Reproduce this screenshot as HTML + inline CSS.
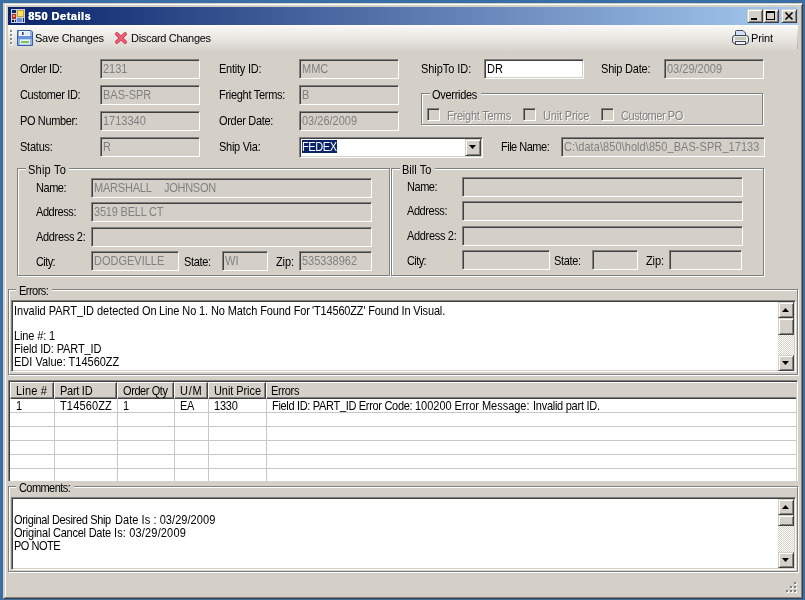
<!DOCTYPE html>
<html><head><meta charset="utf-8"><title>850 Details</title>
<style>
html,body{margin:0;padding:0;width:805px;height:600px;overflow:hidden;background:#3a6ea5}
body{position:relative;font-family:"Liberation Sans",sans-serif;font-size:11px}
div{font-family:"Liberation Sans",sans-serif}
.t{will-change:transform}
</style></head><body>
<div style="position:absolute;left:0px;top:0px;width:805px;height:600px;background:#3a6ea5;"></div>
<div style="position:absolute;left:3px;top:3px;width:800px;height:596px;box-sizing:border-box;background:#d4d0c8;border-style:solid;border-width:1px;border-color:#d4d0c8 #404040 #404040 #d4d0c8;box-shadow:inset 1px 1px 0 #ffffff, inset -1px -1px 0 #808080;"></div>
<div style="position:absolute;left:4px;top:4px;width:1px;height:594px;background:#d4d0c8;"></div>
<div style="position:absolute;left:5px;top:4px;width:1px;height:593px;background:#fff;"></div>
<div style="position:absolute;left:8px;top:7px;width:790px;height:18px;background:linear-gradient(to right,#0a246a,#a6caf0);"></div>
<svg style="position:absolute;left:10px;top:8px" width="16" height="16" viewBox="0 0 16 16">
<rect x="1" y="1" width="14" height="14" fill="#c8d0f0"/>
<rect x="2" y="2" width="13" height="13" fill="#0a246a" opacity="0"/>
<rect x="2" y="2" width="4" height="3" fill="#10285a"/>
<rect x="2" y="6" width="4" height="5" fill="#b03020"/>
<rect x="3" y="7" width="2" height="2" fill="#f09070"/>
<rect x="7" y="2" width="7" height="7" fill="#c8a020"/>
<rect x="8" y="3" width="5" height="5" fill="#ffe060"/>
<rect x="7" y="10" width="5" height="4" fill="#6890e0"/>
<rect x="2" y="12" width="2" height="2" fill="#000"/>
<rect x="5" y="12" width="1" height="2" fill="#10285a"/>
<rect x="13" y="10" width="1" height="4" fill="#10285a"/>
</svg>
<div class="t" style="position:absolute;left:28.20px;top:10px;line-height:13px;font-size:11px;font-weight:700;color:#fff;letter-spacing:0.502px;white-space:pre;text-shadow:0.4px 0 0 #fff;">850 Details</div>
<div style="position:absolute;left:747px;top:9px;width:16px;height:14px;box-sizing:border-box;background:#d4d0c8;border-style:solid;border-width:1px;border-color:#d4d0c8 #404040 #404040 #d4d0c8;box-shadow:inset 1px 1px 0 #ffffff, inset -1px -1px 0 #808080;"></div>
<div style="position:absolute;left:763px;top:9px;width:16px;height:14px;box-sizing:border-box;background:#d4d0c8;border-style:solid;border-width:1px;border-color:#d4d0c8 #404040 #404040 #d4d0c8;box-shadow:inset 1px 1px 0 #ffffff, inset -1px -1px 0 #808080;"></div>
<div style="position:absolute;left:781px;top:9px;width:16px;height:14px;box-sizing:border-box;background:#d4d0c8;border-style:solid;border-width:1px;border-color:#d4d0c8 #404040 #404040 #d4d0c8;box-shadow:inset 1px 1px 0 #ffffff, inset -1px -1px 0 #808080;"></div>
<div style="position:absolute;left:751px;top:18px;width:6px;height:2px;background:#000"></div>
<div style="position:absolute;left:766px;top:11px;width:9px;height:9px;box-sizing:border-box;border:1px solid #000;border-top-width:2px"></div>
<svg style="position:absolute;left:781px;top:9px" width="16" height="14" viewBox="0 0 16 14">
<path d="M4.5 3.5 L11.5 10.5 M11.5 3.5 L4.5 10.5" stroke="#000" stroke-width="1.6" fill="none"/></svg>
<div style="position:absolute;left:8px;top:25px;width:790px;height:26px;background:linear-gradient(to bottom,#fdfdfd 0%,#f6f5f2 12%,#efede9 35%,#e4e1dc 65%,#d7d3cb 100%);"></div>
<div style="position:absolute;left:797px;top:29px;width:1px;height:20px;background:linear-gradient(#e8e6e2,#b0aca4)"></div>
<div style="position:absolute;left:10px;top:30px;width:2px;height:2px;background:#8c8a84;box-shadow:1px 1px 0 #fff;"></div>
<div style="position:absolute;left:10px;top:34px;width:2px;height:2px;background:#8c8a84;box-shadow:1px 1px 0 #fff;"></div>
<div style="position:absolute;left:10px;top:38px;width:2px;height:2px;background:#8c8a84;box-shadow:1px 1px 0 #fff;"></div>
<div style="position:absolute;left:10px;top:42px;width:2px;height:2px;background:#8c8a84;box-shadow:1px 1px 0 #fff;"></div>
<svg style="position:absolute;left:17px;top:30px" width="16" height="16" viewBox="0 0 16 16">
<path d="M0.5 0.5 H14 L15.5 2 V15.5 H0.5 Z" fill="#8ab2ee" stroke="#3a5ca0"/>
<rect x="2" y="1" width="11" height="5" fill="#eef4fe"/>
<rect x="5" y="2" width="1.6" height="3" fill="#34406a"/>
<rect x="8" y="2" width="4" height="3" fill="#dfe7f5"/>
<rect x="1" y="6" width="14" height="3" fill="#6a92d8"/>
<rect x="3" y="9.5" width="10" height="5" fill="#eaf6ff"/>
<rect x="4" y="11" width="8" height="2.2" fill="#86be56"/>
</svg>
<div class="t" style="position:absolute;left:35.40px;top:32px;line-height:13px;font-size:11px;font-weight:400;color:#000;letter-spacing:-0.288px;white-space:pre;">Save Changes</div>
<svg style="position:absolute;left:114px;top:31px" width="14" height="14" viewBox="0 0 14 14">
<path d="M2.9 2.9 L11.1 11.1 M11.1 2.9 L2.9 11.1" stroke="#c03044" stroke-width="3.6" stroke-linecap="round" fill="none"/>
<path d="M2.9 2.9 L11.1 11.1 M11.1 2.9 L2.9 11.1" stroke="#f25c74" stroke-width="2.2" stroke-linecap="round" fill="none"/>
</svg>
<div class="t" style="position:absolute;left:131.40px;top:32px;line-height:13px;font-size:11px;font-weight:400;color:#000;letter-spacing:-0.312px;white-space:pre;">Discard Changes</div>
<svg style="position:absolute;left:732px;top:30px" width="17" height="16" viewBox="0 0 17 16">
<path d="M3.5 7.5 V1.5 Q3.5 0.5 4.5 0.5 H11 L13.5 3 V7.5" fill="#d4e0f4" stroke="#404858"/>
<rect x="0.5" y="5.5" width="16" height="8" rx="2.5" fill="#e8ebee" stroke="#404858"/>
<rect x="3" y="7" width="11" height="3" fill="#c4c8b8"/>
<rect x="3.5" y="11.5" width="10" height="3" fill="#f4f6f8" stroke="#404858"/>
</svg>
<div class="t" style="position:absolute;left:751.40px;top:32px;line-height:13px;font-size:11px;font-weight:400;color:#000;letter-spacing:-0.156px;white-space:pre;">Print</div>
<div class="t" style="position:absolute;left:20.40px;top:63px;line-height:13px;transform:scaleY(1.125);transform-origin:0 10px;font-size:11px;font-weight:400;color:#000;letter-spacing:-0.354px;white-space:pre;">Order ID:</div>
<div style="position:absolute;left:100px;top:59px;width:100px;height:20px;box-sizing:border-box;background:#d4d0c8;border-style:solid;border-width:1px;border-color:#808080 #ffffff #ffffff #808080;box-shadow:inset 1px 1px 0 #404040, inset -1px -1px 0 #d4d0c8;"></div>
<div class="t" style="position:absolute;left:103.40px;top:63px;line-height:13px;transform:scaleY(1.125);transform-origin:0 10px;font-size:11px;font-weight:400;color:#808080;letter-spacing:0.000px;white-space:pre;">2131</div>
<div class="t" style="position:absolute;left:20.40px;top:89px;line-height:13px;transform:scaleY(1.125);transform-origin:0 10px;font-size:11px;font-weight:400;color:#000;letter-spacing:-0.382px;white-space:pre;">Customer ID:</div>
<div style="position:absolute;left:100px;top:85px;width:100px;height:20px;box-sizing:border-box;background:#d4d0c8;border-style:solid;border-width:1px;border-color:#808080 #ffffff #ffffff #808080;box-shadow:inset 1px 1px 0 #404040, inset -1px -1px 0 #d4d0c8;"></div>
<div class="t" style="position:absolute;left:103.40px;top:89px;line-height:13px;transform:scaleY(1.125);transform-origin:0 10px;font-size:11px;font-weight:400;color:#808080;letter-spacing:0.000px;white-space:pre;">BAS-SPR</div>
<div class="t" style="position:absolute;left:20.40px;top:115px;line-height:13px;transform:scaleY(1.125);transform-origin:0 10px;font-size:11px;font-weight:400;color:#000;letter-spacing:-0.360px;white-space:pre;">PO Number:</div>
<div style="position:absolute;left:100px;top:111px;width:100px;height:20px;box-sizing:border-box;background:#d4d0c8;border-style:solid;border-width:1px;border-color:#808080 #ffffff #ffffff #808080;box-shadow:inset 1px 1px 0 #404040, inset -1px -1px 0 #d4d0c8;"></div>
<div class="t" style="position:absolute;left:103.40px;top:115px;line-height:13px;transform:scaleY(1.125);transform-origin:0 10px;font-size:11px;font-weight:400;color:#808080;letter-spacing:0.000px;white-space:pre;">1713340</div>
<div class="t" style="position:absolute;left:20.40px;top:141px;line-height:13px;transform:scaleY(1.125);transform-origin:0 10px;font-size:11px;font-weight:400;color:#000;letter-spacing:-0.225px;white-space:pre;">Status:</div>
<div style="position:absolute;left:100px;top:137px;width:100px;height:20px;box-sizing:border-box;background:#d4d0c8;border-style:solid;border-width:1px;border-color:#808080 #ffffff #ffffff #808080;box-shadow:inset 1px 1px 0 #404040, inset -1px -1px 0 #d4d0c8;"></div>
<div class="t" style="position:absolute;left:103.40px;top:141px;line-height:13px;transform:scaleY(1.125);transform-origin:0 10px;font-size:11px;font-weight:400;color:#808080;letter-spacing:0.000px;white-space:pre;">R</div>
<div class="t" style="position:absolute;left:219.40px;top:63px;line-height:13px;transform:scaleY(1.125);transform-origin:0 10px;font-size:11px;font-weight:400;color:#000;letter-spacing:-0.236px;white-space:pre;">Entity ID:</div>
<div style="position:absolute;left:299px;top:59px;width:100px;height:20px;box-sizing:border-box;background:#d4d0c8;border-style:solid;border-width:1px;border-color:#808080 #ffffff #ffffff #808080;box-shadow:inset 1px 1px 0 #404040, inset -1px -1px 0 #d4d0c8;"></div>
<div class="t" style="position:absolute;left:302.40px;top:63px;line-height:13px;transform:scaleY(1.125);transform-origin:0 10px;font-size:11px;font-weight:400;color:#808080;letter-spacing:0.000px;white-space:pre;">MMC</div>
<div class="t" style="position:absolute;left:219.40px;top:89px;line-height:13px;transform:scaleY(1.125);transform-origin:0 10px;font-size:11px;font-weight:400;color:#000;letter-spacing:-0.292px;white-space:pre;">Frieght Terms:</div>
<div style="position:absolute;left:299px;top:85px;width:100px;height:20px;box-sizing:border-box;background:#d4d0c8;border-style:solid;border-width:1px;border-color:#808080 #ffffff #ffffff #808080;box-shadow:inset 1px 1px 0 #404040, inset -1px -1px 0 #d4d0c8;"></div>
<div class="t" style="position:absolute;left:302.40px;top:89px;line-height:13px;transform:scaleY(1.125);transform-origin:0 10px;font-size:11px;font-weight:400;color:#808080;letter-spacing:0.000px;white-space:pre;">B</div>
<div class="t" style="position:absolute;left:219.40px;top:115px;line-height:13px;transform:scaleY(1.125);transform-origin:0 10px;font-size:11px;font-weight:400;color:#000;letter-spacing:-0.317px;white-space:pre;">Order Date:</div>
<div style="position:absolute;left:299px;top:111px;width:100px;height:20px;box-sizing:border-box;background:#d4d0c8;border-style:solid;border-width:1px;border-color:#808080 #ffffff #ffffff #808080;box-shadow:inset 1px 1px 0 #404040, inset -1px -1px 0 #d4d0c8;"></div>
<div class="t" style="position:absolute;left:302.40px;top:115px;line-height:13px;transform:scaleY(1.125);transform-origin:0 10px;font-size:11px;font-weight:400;color:#808080;letter-spacing:0.000px;white-space:pre;">03/26/2009</div>
<div class="t" style="position:absolute;left:219.40px;top:141px;line-height:13px;transform:scaleY(1.125);transform-origin:0 10px;font-size:11px;font-weight:400;color:#000;letter-spacing:-0.266px;white-space:pre;">Ship Via:</div>
<div class="t" style="position:absolute;left:421.40px;top:63px;line-height:13px;transform:scaleY(1.125);transform-origin:0 10px;font-size:11px;font-weight:400;color:#000;letter-spacing:-0.050px;white-space:pre;">ShipTo ID:</div>
<div style="position:absolute;left:484px;top:59px;width:100px;height:20px;box-sizing:border-box;background:#fff;border-style:solid;border-width:1px;border-color:#808080 #ffffff #ffffff #808080;box-shadow:inset 1px 1px 0 #404040, inset -1px -1px 0 #d4d0c8;"></div>
<div class="t" style="position:absolute;left:487.40px;top:63px;line-height:13px;transform:scaleY(1.125);transform-origin:0 10px;font-size:11px;font-weight:400;color:#000;letter-spacing:0.000px;white-space:pre;">DR</div>
<div class="t" style="position:absolute;left:601.40px;top:63px;line-height:13px;transform:scaleY(1.125);transform-origin:0 10px;font-size:11px;font-weight:400;color:#000;letter-spacing:-0.197px;white-space:pre;">Ship Date:</div>
<div style="position:absolute;left:664px;top:59px;width:100px;height:20px;box-sizing:border-box;background:#d4d0c8;border-style:solid;border-width:1px;border-color:#808080 #ffffff #ffffff #808080;box-shadow:inset 1px 1px 0 #404040, inset -1px -1px 0 #d4d0c8;"></div>
<div class="t" style="position:absolute;left:667.40px;top:63px;line-height:13px;transform:scaleY(1.125);transform-origin:0 10px;font-size:11px;font-weight:400;color:#808080;letter-spacing:0.000px;white-space:pre;">03/29/2009</div>
<div style="position:absolute;left:421px;top:93px;width:342px;height:32px;box-sizing:border-box;border:1px solid #808080;box-shadow:inset 1px 1px 0 #ffffff, 1px 1px 0 #ffffff;"></div>
<div style="position:absolute;left:430px;top:92px;width:51px;height:3px;background:#d4d0c8;"></div>
<div class="t" style="position:absolute;left:432.40px;top:89px;line-height:13px;transform:scaleY(1.125);transform-origin:0 10px;font-size:11px;font-weight:400;color:#000;letter-spacing:-0.298px;white-space:pre;">Overrides</div>
<div style="position:absolute;left:427px;top:108px;width:13px;height:13px;box-sizing:border-box;background:#d4d0c8;border-style:solid;border-width:1px;border-color:#808080 #ffffff #ffffff #808080;box-shadow:inset 1px 1px 0 #404040, inset -1px -1px 0 #d4d0c8;"></div>
<div class="t" style="position:absolute;left:447.40px;top:110px;line-height:13px;transform:scaleY(1.125);transform-origin:0 10px;font-size:11px;font-weight:400;color:#808080;letter-spacing:-0.229px;white-space:pre;text-shadow:1px 1px 0 #fff;">Freight Terms</div>
<div style="position:absolute;left:523px;top:108px;width:13px;height:13px;box-sizing:border-box;background:#d4d0c8;border-style:solid;border-width:1px;border-color:#808080 #ffffff #ffffff #808080;box-shadow:inset 1px 1px 0 #404040, inset -1px -1px 0 #d4d0c8;"></div>
<div class="t" style="position:absolute;left:543.40px;top:110px;line-height:13px;transform:scaleY(1.125);transform-origin:0 10px;font-size:11px;font-weight:400;color:#808080;letter-spacing:-0.154px;white-space:pre;text-shadow:1px 1px 0 #fff;">Unit Price</div>
<div style="position:absolute;left:601px;top:108px;width:13px;height:13px;box-sizing:border-box;background:#d4d0c8;border-style:solid;border-width:1px;border-color:#808080 #ffffff #ffffff #808080;box-shadow:inset 1px 1px 0 #404040, inset -1px -1px 0 #d4d0c8;"></div>
<div class="t" style="position:absolute;left:621.40px;top:110px;line-height:13px;transform:scaleY(1.125);transform-origin:0 10px;font-size:11px;font-weight:400;color:#808080;letter-spacing:-0.434px;white-space:pre;text-shadow:1px 1px 0 #fff;">Customer PO</div>
<div style="position:absolute;left:299px;top:137px;width:184px;height:21px;box-sizing:border-box;background:#fff;border-style:solid;border-width:1px;border-color:#808080 #ffffff #ffffff #808080;box-shadow:inset 1px 1px 0 #404040, inset -1px -1px 0 #d4d0c8;"></div>
<div style="position:absolute;left:302px;top:140px;width:35px;height:13px;background:#0a246a;"></div>
<div class="t" style="position:absolute;left:302.40px;top:141px;line-height:13px;transform:scaleY(1.125);transform-origin:0 10px;font-size:11px;font-weight:400;color:#fff;letter-spacing:-0.422px;white-space:pre;">FEDEX</div>
<div style="position:absolute;left:465px;top:139px;width:16px;height:17px;box-sizing:border-box;background:#d4d0c8;border-style:solid;border-width:1px;border-color:#d4d0c8 #404040 #404040 #d4d0c8;box-shadow:inset 1px 1px 0 #ffffff, inset -1px -1px 0 #808080;"></div>
<svg style="position:absolute;left:469px;top:145px" width="7" height="4" viewBox="0 0 7 4"><path d="M0 0H7L3.5 4Z" fill="#000"/></svg>
<div class="t" style="position:absolute;left:501.40px;top:141px;line-height:13px;transform:scaleY(1.125);transform-origin:0 10px;font-size:11px;font-weight:400;color:#000;letter-spacing:-0.499px;white-space:pre;">File Name:</div>
<div style="position:absolute;left:561px;top:137px;width:204px;height:20px;box-sizing:border-box;background:#d4d0c8;border-style:solid;border-width:1px;border-color:#808080 #ffffff #ffffff #808080;box-shadow:inset 1px 1px 0 #404040, inset -1px -1px 0 #d4d0c8;"></div>
<div style="position:absolute;left:563px;top:139px;width:200px;height:16px;overflow:hidden">
<div class="t" style="position:absolute;left:1.20px;top:2px;line-height:13px;transform:scaleY(1.125);transform-origin:0 10px;font-size:11px;font-weight:400;color:#808080;letter-spacing:0.065px;white-space:pre;">C:\data\850\hold\850<span style="position:relative;top:-1.5px">_</span>BAS-SPR<span style="position:relative;top:-1.5px">_</span>17133</div>
</div>
<div style="position:absolute;left:17px;top:168px;width:373px;height:108px;box-sizing:border-box;border:1px solid #808080;box-shadow:inset 1px 1px 0 #ffffff, 1px 1px 0 #ffffff;"></div>
<div style="position:absolute;left:26px;top:167px;width:43px;height:3px;background:#d4d0c8;"></div>
<div class="t" style="position:absolute;left:27.90px;top:164px;line-height:13px;transform:scaleY(1.125);transform-origin:0 10px;font-size:11px;font-weight:400;color:#000;letter-spacing:0.217px;white-space:pre;">Ship To</div>
<div class="t" style="position:absolute;left:36.40px;top:182px;line-height:13px;transform:scaleY(1.125);transform-origin:0 10px;font-size:11px;font-weight:400;color:#000;letter-spacing:-0.452px;white-space:pre;">Name:</div>
<div class="t" style="position:absolute;left:36.40px;top:206px;line-height:13px;transform:scaleY(1.125);transform-origin:0 10px;font-size:11px;font-weight:400;color:#000;letter-spacing:-0.417px;white-space:pre;">Address:</div>
<div class="t" style="position:absolute;left:36.40px;top:231px;line-height:13px;transform:scaleY(1.125);transform-origin:0 10px;font-size:11px;font-weight:400;color:#000;letter-spacing:-0.322px;white-space:pre;">Address 2:</div>
<div class="t" style="position:absolute;left:36.40px;top:256px;line-height:13px;transform:scaleY(1.125);transform-origin:0 10px;font-size:11px;font-weight:400;color:#000;letter-spacing:-0.600px;white-space:pre;">City:</div>
<div style="position:absolute;left:91px;top:178px;width:281px;height:20px;box-sizing:border-box;background:#d4d0c8;border-style:solid;border-width:1px;border-color:#808080 #ffffff #ffffff #808080;box-shadow:inset 1px 1px 0 #404040, inset -1px -1px 0 #d4d0c8;"></div>
<div class="t" style="position:absolute;left:94.00px;top:182px;line-height:13px;transform:scaleY(1.125);transform-origin:0 10px;font-size:11px;font-weight:400;color:#808080;letter-spacing:-0.200px;white-space:pre;">MARSHALL</div>
<div class="t" style="position:absolute;left:163.60px;top:182px;line-height:13px;transform:scaleY(1.125);transform-origin:0 10px;font-size:11px;font-weight:400;color:#808080;letter-spacing:-0.280px;white-space:pre;">JOHNSON</div>
<div style="position:absolute;left:91px;top:202px;width:281px;height:20px;box-sizing:border-box;background:#d4d0c8;border-style:solid;border-width:1px;border-color:#808080 #ffffff #ffffff #808080;box-shadow:inset 1px 1px 0 #404040, inset -1px -1px 0 #d4d0c8;"></div>
<div class="t" style="position:absolute;left:94.40px;top:206px;line-height:13px;transform:scaleY(1.125);transform-origin:0 10px;font-size:11px;font-weight:400;color:#808080;letter-spacing:-0.205px;white-space:pre;">3519 BELL CT</div>
<div style="position:absolute;left:91px;top:227px;width:281px;height:20px;box-sizing:border-box;background:#d4d0c8;border-style:solid;border-width:1px;border-color:#808080 #ffffff #ffffff #808080;box-shadow:inset 1px 1px 0 #404040, inset -1px -1px 0 #d4d0c8;"></div>
<div style="position:absolute;left:91px;top:251px;width:88px;height:20px;box-sizing:border-box;background:#d4d0c8;border-style:solid;border-width:1px;border-color:#808080 #ffffff #ffffff #808080;box-shadow:inset 1px 1px 0 #404040, inset -1px -1px 0 #d4d0c8;"></div>
<div class="t" style="position:absolute;left:94.40px;top:255px;line-height:13px;transform:scaleY(1.125);transform-origin:0 10px;font-size:11px;font-weight:400;color:#808080;letter-spacing:0.000px;white-space:pre;">DODGEVILLE</div>
<div class="t" style="position:absolute;left:184.40px;top:256px;line-height:13px;transform:scaleY(1.125);transform-origin:0 10px;font-size:11px;font-weight:400;color:#000;letter-spacing:-0.330px;white-space:pre;">State:</div>
<div style="position:absolute;left:222px;top:251px;width:46px;height:20px;box-sizing:border-box;background:#d4d0c8;border-style:solid;border-width:1px;border-color:#808080 #ffffff #ffffff #808080;box-shadow:inset 1px 1px 0 #404040, inset -1px -1px 0 #d4d0c8;"></div>
<div class="t" style="position:absolute;left:225.40px;top:255px;line-height:13px;transform:scaleY(1.125);transform-origin:0 10px;font-size:11px;font-weight:400;color:#808080;letter-spacing:0.000px;white-space:pre;">WI</div>
<div class="t" style="position:absolute;left:276.40px;top:256px;line-height:13px;transform:scaleY(1.125);transform-origin:0 10px;font-size:11px;font-weight:400;color:#000;letter-spacing:-0.115px;white-space:pre;">Zip:</div>
<div style="position:absolute;left:299px;top:251px;width:73px;height:20px;box-sizing:border-box;background:#d4d0c8;border-style:solid;border-width:1px;border-color:#808080 #ffffff #ffffff #808080;box-shadow:inset 1px 1px 0 #404040, inset -1px -1px 0 #d4d0c8;"></div>
<div class="t" style="position:absolute;left:302.40px;top:255px;line-height:13px;transform:scaleY(1.125);transform-origin:0 10px;font-size:11px;font-weight:400;color:#808080;letter-spacing:0.000px;white-space:pre;">535338962</div>
<div style="position:absolute;left:391px;top:168px;width:373px;height:108px;box-sizing:border-box;border:1px solid #808080;box-shadow:inset 1px 1px 0 #ffffff, 1px 1px 0 #ffffff;"></div>
<div style="position:absolute;left:400px;top:167px;width:35px;height:3px;background:#d4d0c8;"></div>
<div class="t" style="position:absolute;left:402.20px;top:164px;line-height:13px;transform:scaleY(1.125);transform-origin:0 10px;font-size:11px;font-weight:400;color:#000;letter-spacing:0.024px;white-space:pre;">Bill To</div>
<div class="t" style="position:absolute;left:407.40px;top:181px;line-height:13px;transform:scaleY(1.125);transform-origin:0 10px;font-size:11px;font-weight:400;color:#000;letter-spacing:-0.452px;white-space:pre;">Name:</div>
<div class="t" style="position:absolute;left:407.40px;top:205px;line-height:13px;transform:scaleY(1.125);transform-origin:0 10px;font-size:11px;font-weight:400;color:#000;letter-spacing:-0.417px;white-space:pre;">Address:</div>
<div class="t" style="position:absolute;left:407.40px;top:230px;line-height:13px;transform:scaleY(1.125);transform-origin:0 10px;font-size:11px;font-weight:400;color:#000;letter-spacing:-0.322px;white-space:pre;">Address 2:</div>
<div class="t" style="position:absolute;left:407.40px;top:255px;line-height:13px;transform:scaleY(1.125);transform-origin:0 10px;font-size:11px;font-weight:400;color:#000;letter-spacing:-0.600px;white-space:pre;">City:</div>
<div style="position:absolute;left:462px;top:177px;width:281px;height:20px;box-sizing:border-box;background:#d4d0c8;border-style:solid;border-width:1px;border-color:#808080 #ffffff #ffffff #808080;box-shadow:inset 1px 1px 0 #404040, inset -1px -1px 0 #d4d0c8;"></div>
<div style="position:absolute;left:462px;top:201px;width:281px;height:20px;box-sizing:border-box;background:#d4d0c8;border-style:solid;border-width:1px;border-color:#808080 #ffffff #ffffff #808080;box-shadow:inset 1px 1px 0 #404040, inset -1px -1px 0 #d4d0c8;"></div>
<div style="position:absolute;left:462px;top:226px;width:281px;height:20px;box-sizing:border-box;background:#d4d0c8;border-style:solid;border-width:1px;border-color:#808080 #ffffff #ffffff #808080;box-shadow:inset 1px 1px 0 #404040, inset -1px -1px 0 #d4d0c8;"></div>
<div style="position:absolute;left:462px;top:250px;width:88px;height:20px;box-sizing:border-box;background:#d4d0c8;border-style:solid;border-width:1px;border-color:#808080 #ffffff #ffffff #808080;box-shadow:inset 1px 1px 0 #404040, inset -1px -1px 0 #d4d0c8;"></div>
<div class="t" style="position:absolute;left:554.40px;top:255px;line-height:13px;transform:scaleY(1.125);transform-origin:0 10px;font-size:11px;font-weight:400;color:#000;letter-spacing:-0.330px;white-space:pre;">State:</div>
<div style="position:absolute;left:592px;top:250px;width:46px;height:20px;box-sizing:border-box;background:#d4d0c8;border-style:solid;border-width:1px;border-color:#808080 #ffffff #ffffff #808080;box-shadow:inset 1px 1px 0 #404040, inset -1px -1px 0 #d4d0c8;"></div>
<div class="t" style="position:absolute;left:646.40px;top:255px;line-height:13px;transform:scaleY(1.125);transform-origin:0 10px;font-size:11px;font-weight:400;color:#000;letter-spacing:-0.115px;white-space:pre;">Zip:</div>
<div style="position:absolute;left:669px;top:250px;width:73px;height:20px;box-sizing:border-box;background:#d4d0c8;border-style:solid;border-width:1px;border-color:#808080 #ffffff #ffffff #808080;box-shadow:inset 1px 1px 0 #404040, inset -1px -1px 0 #d4d0c8;"></div>
<div style="position:absolute;left:8px;top:289px;width:790px;height:86px;box-sizing:border-box;border:1px solid #808080;box-shadow:inset 1px 1px 0 #ffffff, 1px 1px 0 #ffffff;"></div>
<div style="position:absolute;left:16px;top:288px;width:36px;height:3px;background:#d4d0c8;"></div>
<div class="t" style="position:absolute;left:18.90px;top:285px;line-height:13px;transform:scaleY(1.125);transform-origin:0 10px;font-size:11px;font-weight:400;color:#000;letter-spacing:-0.533px;white-space:pre;">Errors:</div>
<div style="position:absolute;left:11px;top:300px;width:785px;height:72px;box-sizing:border-box;background:#fff;border-style:solid;border-width:1px;border-color:#808080 #ffffff #ffffff #808080;box-shadow:inset 1px 1px 0 #404040, inset -1px -1px 0 #d4d0c8;"></div>
<div style="position:absolute;left:778px;top:302px;width:16px;height:16px;box-sizing:border-box;background:#d4d0c8;border-style:solid;border-width:1px;border-color:#d4d0c8 #404040 #404040 #d4d0c8;box-shadow:inset 1px 1px 0 #ffffff, inset -1px -1px 0 #808080;"></div>
<svg style="position:absolute;left:782px;top:308px" width="7" height="4" viewBox="0 0 7 4"><path d="M3.5 0L7 4H0Z" fill="#000"/></svg>
<div style="position:absolute;left:778px;top:318px;width:16px;height:17px;box-sizing:border-box;background:#d4d0c8;border-style:solid;border-width:1px;border-color:#d4d0c8 #404040 #404040 #d4d0c8;box-shadow:inset 1px 1px 0 #ffffff, inset -1px -1px 0 #808080;"></div>
<div style="position:absolute;left:778px;top:335px;width:16px;height:20px;background:repeating-conic-gradient(#ffffff 0 25%, #d4d0c8 0 50%) 0 0/2px 2px;"></div>
<div style="position:absolute;left:778px;top:355px;width:16px;height:16px;box-sizing:border-box;background:#d4d0c8;border-style:solid;border-width:1px;border-color:#d4d0c8 #404040 #404040 #d4d0c8;box-shadow:inset 1px 1px 0 #ffffff, inset -1px -1px 0 #808080;"></div>
<svg style="position:absolute;left:782px;top:361px" width="7" height="4" viewBox="0 0 7 4"><path d="M0 0H7L3.5 4Z" fill="#000"/></svg>
<div class="t" style="position:absolute;left:13.90px;top:305px;line-height:13px;transform:scaleY(1.125);transform-origin:0 10px;font-size:11px;font-weight:400;color:#000;letter-spacing:-0.022px;white-space:pre;">Invalid PART<span style="position:relative;top:-1.5px">_</span>ID detected On</div>
<div class="t" style="position:absolute;left:158.70px;top:305px;line-height:13px;transform:scaleY(1.125);transform-origin:0 10px;font-size:11px;font-weight:400;color:#000;letter-spacing:-0.110px;white-space:pre;">Line No 1. No Match Found For</div>
<div class="t" style="position:absolute;left:311.50px;top:305px;line-height:13px;transform:scaleY(1.125);transform-origin:0 10px;font-size:11px;font-weight:400;color:#000;letter-spacing:-0.158px;white-space:pre;">&#x27;T14560ZZ&#x27; Found In Visual.</div>
<div class="t" style="position:absolute;left:13.90px;top:330px;line-height:13px;transform:scaleY(1.125);transform-origin:0 10px;font-size:11px;font-weight:400;color:#000;letter-spacing:-0.125px;white-space:pre;">Line #: 1</div>
<div class="t" style="position:absolute;left:13.90px;top:343px;line-height:13px;transform:scaleY(1.125);transform-origin:0 10px;font-size:11px;font-weight:400;color:#000;letter-spacing:-0.128px;white-space:pre;">Field ID: PART<span style="position:relative;top:-1.5px">_</span>ID</div>
<div class="t" style="position:absolute;left:13.90px;top:356px;line-height:13px;transform:scaleY(1.125);transform-origin:0 10px;font-size:11px;font-weight:400;color:#000;letter-spacing:-0.004px;white-space:pre;">EDI Value: T14560ZZ</div>
<div style="position:absolute;left:8px;top:380px;width:790px;height:110px;box-sizing:border-box;background:#fff;border-style:solid;border-width:1px;border-color:#808080 #ffffff #ffffff #808080;box-shadow:inset 1px 1px 0 #404040, inset -1px -1px 0 #d4d0c8;"></div>
<div style="position:absolute;left:10px;top:382px;width:44px;height:17px;box-sizing:border-box;background:#d4d0c8;border-style:solid;border-width:1px 0 1px 1px;border-right-width:1px;border-color:#ffffff #404040 #404040 #ffffff;box-shadow:inset -1px -1px 0 #808080;"></div>
<div class="t" style="position:absolute;left:16.00px;top:385px;line-height:13px;transform:scaleY(1.125);transform-origin:0 10px;font-size:11px;font-weight:400;color:#000;letter-spacing:0.163px;white-space:pre;">Line #</div>
<div style="position:absolute;left:54px;top:382px;width:63px;height:17px;box-sizing:border-box;background:#d4d0c8;border-style:solid;border-width:1px 0 1px 1px;border-right-width:1px;border-color:#ffffff #404040 #404040 #ffffff;box-shadow:inset -1px -1px 0 #808080;"></div>
<div class="t" style="position:absolute;left:60.20px;top:385px;line-height:13px;transform:scaleY(1.125);transform-origin:0 10px;font-size:11px;font-weight:400;color:#000;letter-spacing:-0.272px;white-space:pre;">Part ID</div>
<div style="position:absolute;left:117px;top:382px;width:57px;height:17px;box-sizing:border-box;background:#d4d0c8;border-style:solid;border-width:1px 0 1px 1px;border-right-width:1px;border-color:#ffffff #404040 #404040 #ffffff;box-shadow:inset -1px -1px 0 #808080;"></div>
<div class="t" style="position:absolute;left:123.20px;top:385px;line-height:13px;transform:scaleY(1.125);transform-origin:0 10px;font-size:11px;font-weight:400;color:#000;letter-spacing:-0.412px;white-space:pre;">Order Qty</div>
<div style="position:absolute;left:174px;top:382px;width:34px;height:17px;box-sizing:border-box;background:#d4d0c8;border-style:solid;border-width:1px 0 1px 1px;border-right-width:1px;border-color:#ffffff #404040 #404040 #ffffff;box-shadow:inset -1px -1px 0 #808080;"></div>
<div class="t" style="position:absolute;left:180.20px;top:385px;line-height:13px;transform:scaleY(1.125);transform-origin:0 10px;font-size:11px;font-weight:400;color:#000;letter-spacing:0.764px;white-space:pre;">U/M</div>
<div style="position:absolute;left:208px;top:382px;width:58px;height:17px;box-sizing:border-box;background:#d4d0c8;border-style:solid;border-width:1px 0 1px 1px;border-right-width:1px;border-color:#ffffff #404040 #404040 #ffffff;box-shadow:inset -1px -1px 0 #808080;"></div>
<div class="t" style="position:absolute;left:213.80px;top:385px;line-height:13px;transform:scaleY(1.125);transform-origin:0 10px;font-size:11px;font-weight:400;color:#000;letter-spacing:-0.076px;white-space:pre;">Unit Price</div>
<div style="position:absolute;left:266px;top:382px;width:530px;height:17px;box-sizing:border-box;background:#d4d0c8;border-style:solid;border-width:1px 0 1px 1px;border-color:#ffffff #404040 #404040 #ffffff;box-shadow:inset 0 -1px 0 #808080;"></div>
<div class="t" style="position:absolute;left:271.40px;top:385px;line-height:13px;transform:scaleY(1.125);transform-origin:0 10px;font-size:11px;font-weight:400;color:#000;letter-spacing:-0.290px;white-space:pre;">Errors</div>
<div style="position:absolute;left:10px;top:412px;width:786px;height:1px;background:#c8c8c8;"></div>
<div style="position:absolute;left:10px;top:426px;width:786px;height:1px;background:#c8c8c8;"></div>
<div style="position:absolute;left:10px;top:440px;width:786px;height:1px;background:#c8c8c8;"></div>
<div style="position:absolute;left:10px;top:454px;width:786px;height:1px;background:#c8c8c8;"></div>
<div style="position:absolute;left:10px;top:468px;width:786px;height:1px;background:#c8c8c8;"></div>
<div style="position:absolute;left:54px;top:398px;width:1px;height:100px;background:#c8c8c8;"></div>
<div style="position:absolute;left:117px;top:398px;width:1px;height:100px;background:#c8c8c8;"></div>
<div style="position:absolute;left:174px;top:398px;width:1px;height:100px;background:#c8c8c8;"></div>
<div style="position:absolute;left:208px;top:398px;width:1px;height:100px;background:#c8c8c8;"></div>
<div style="position:absolute;left:266px;top:398px;width:1px;height:100px;background:#c8c8c8;"></div>
<div class="t" style="position:absolute;left:16.00px;top:400px;line-height:13px;transform:scaleY(1.125);transform-origin:0 10px;font-size:11px;font-weight:400;color:#000;letter-spacing:-0.154px;white-space:pre;">1</div>
<div class="t" style="position:absolute;left:60.20px;top:400px;line-height:13px;transform:scaleY(1.125);transform-origin:0 10px;font-size:11px;font-weight:400;color:#000;letter-spacing:0.150px;white-space:pre;">T14560ZZ</div>
<div class="t" style="position:absolute;left:123.20px;top:400px;line-height:13px;transform:scaleY(1.125);transform-origin:0 10px;font-size:11px;font-weight:400;color:#000;letter-spacing:-0.154px;white-space:pre;">1</div>
<div class="t" style="position:absolute;left:180.20px;top:400px;line-height:13px;transform:scaleY(1.125);transform-origin:0 10px;font-size:11px;font-weight:400;color:#000;letter-spacing:-0.411px;white-space:pre;">EA</div>
<div class="t" style="position:absolute;left:213.80px;top:400px;line-height:13px;transform:scaleY(1.125);transform-origin:0 10px;font-size:11px;font-weight:400;color:#000;letter-spacing:-0.235px;white-space:pre;">1330</div>
<div class="t" style="position:absolute;left:272.40px;top:400px;line-height:13px;transform:scaleY(1.125);transform-origin:0 10px;font-size:11px;font-weight:400;color:#000;letter-spacing:-0.316px;white-space:pre;">Field ID: PART<span style="position:relative;top:-1.5px">_</span>ID Error Code:</div>
<div class="t" style="position:absolute;left:415.40px;top:400px;line-height:13px;transform:scaleY(1.125);transform-origin:0 10px;font-size:11px;font-weight:400;color:#000;letter-spacing:-0.023px;white-space:pre;">100200 Error Message:</div>
<div class="t" style="position:absolute;left:532.90px;top:400px;line-height:13px;transform:scaleY(1.125);transform-origin:0 10px;font-size:11px;font-weight:400;color:#000;letter-spacing:-0.261px;white-space:pre;">Invalid part ID.</div>
<div style="position:absolute;left:8px;top:481px;width:790px;height:94px;background:#d4d0c8;"></div>
<div style="position:absolute;left:8px;top:486px;width:790px;height:86px;box-sizing:border-box;border:1px solid #808080;box-shadow:inset 1px 1px 0 #ffffff, 1px 1px 0 #ffffff;"></div>
<div style="position:absolute;left:16px;top:485px;width:58px;height:3px;background:#d4d0c8;"></div>
<div class="t" style="position:absolute;left:18.90px;top:482px;line-height:13px;transform:scaleY(1.125);transform-origin:0 10px;font-size:11px;font-weight:400;color:#000;letter-spacing:-0.569px;white-space:pre;">Comments:</div>
<div style="position:absolute;left:11px;top:497px;width:785px;height:73px;box-sizing:border-box;background:#fff;border-style:solid;border-width:1px;border-color:#808080 #ffffff #ffffff #808080;box-shadow:inset 1px 1px 0 #404040, inset -1px -1px 0 #d4d0c8;"></div>
<div style="position:absolute;left:778px;top:499px;width:16px;height:16px;box-sizing:border-box;background:#d4d0c8;border-style:solid;border-width:1px;border-color:#d4d0c8 #404040 #404040 #d4d0c8;box-shadow:inset 1px 1px 0 #ffffff, inset -1px -1px 0 #808080;"></div>
<svg style="position:absolute;left:782px;top:505px" width="7" height="4" viewBox="0 0 7 4"><path d="M3.5 0L7 4H0Z" fill="#000"/></svg>
<div style="position:absolute;left:778px;top:515px;width:16px;height:11px;box-sizing:border-box;background:#d4d0c8;border-style:solid;border-width:1px;border-color:#d4d0c8 #404040 #404040 #d4d0c8;box-shadow:inset 1px 1px 0 #ffffff, inset -1px -1px 0 #808080;"></div>
<div style="position:absolute;left:778px;top:526px;width:16px;height:26px;background:repeating-conic-gradient(#ffffff 0 25%, #d4d0c8 0 50%) 0 0/2px 2px;"></div>
<div style="position:absolute;left:778px;top:552px;width:16px;height:16px;box-sizing:border-box;background:#d4d0c8;border-style:solid;border-width:1px;border-color:#d4d0c8 #404040 #404040 #d4d0c8;box-shadow:inset 1px 1px 0 #ffffff, inset -1px -1px 0 #808080;"></div>
<svg style="position:absolute;left:782px;top:558px" width="7" height="4" viewBox="0 0 7 4"><path d="M0 0H7L3.5 4Z" fill="#000"/></svg>
<div class="t" style="position:absolute;left:14.30px;top:514px;line-height:13px;transform:scaleY(1.125);transform-origin:0 10px;font-size:11px;font-weight:400;color:#000;letter-spacing:-0.337px;white-space:pre;">Original Desired Ship</div>
<div class="t" style="position:absolute;left:115.10px;top:514px;line-height:13px;transform:scaleY(1.125);transform-origin:0 10px;font-size:11px;font-weight:400;color:#000;letter-spacing:0.064px;white-space:pre;">Date Is : 03/29/2009</div>
<div class="t" style="position:absolute;left:14.30px;top:527px;line-height:13px;transform:scaleY(1.125);transform-origin:0 10px;font-size:11px;font-weight:400;color:#000;letter-spacing:-0.226px;white-space:pre;">Original Cancel Date</div>
<div class="t" style="position:absolute;left:114.30px;top:527px;line-height:13px;transform:scaleY(1.125);transform-origin:0 10px;font-size:11px;font-weight:400;color:#000;letter-spacing:0.159px;white-space:pre;">Is: 03/29/2009</div>
<div class="t" style="position:absolute;left:14.40px;top:540px;line-height:13px;transform:scaleY(1.125);transform-origin:0 10px;font-size:11px;font-weight:400;color:#000;letter-spacing:-0.486px;white-space:pre;">PO NOTE</div>
<div style="position:absolute;left:794px;top:582px;width:2px;height:2px;background:#808080;box-shadow:1px 1px 0 #fff;"></div>
<div style="position:absolute;left:790px;top:586px;width:2px;height:2px;background:#808080;box-shadow:1px 1px 0 #fff;"></div>
<div style="position:absolute;left:794px;top:586px;width:2px;height:2px;background:#808080;box-shadow:1px 1px 0 #fff;"></div>
<div style="position:absolute;left:786px;top:590px;width:2px;height:2px;background:#808080;box-shadow:1px 1px 0 #fff;"></div>
<div style="position:absolute;left:790px;top:590px;width:2px;height:2px;background:#808080;box-shadow:1px 1px 0 #fff;"></div>
<div style="position:absolute;left:794px;top:590px;width:2px;height:2px;background:#808080;box-shadow:1px 1px 0 #fff;"></div>
</body></html>
